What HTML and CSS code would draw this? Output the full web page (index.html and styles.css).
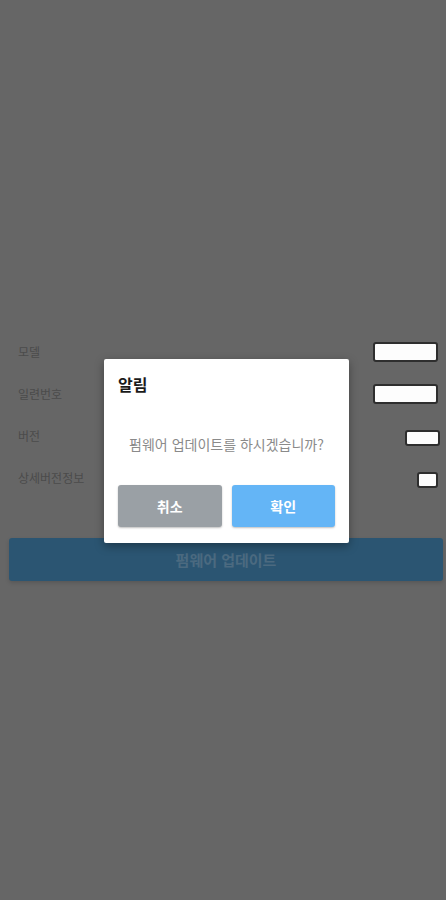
FILE: index.html
```html
<!DOCTYPE html>
<html lang="ko">
<head>
  <meta charset="UTF-8" />
  <meta name="viewport" content="width=device-width, initial-scale=1.0" />
  <title>펌웨어 업데이트</title>
  <link rel="stylesheet" href="styles.css">
</head>
<body>
  <div class="info-list">
    <div class="info-row">
      <span class="info-label">모델</span>
      <span class="info-value value-wide"></span>
    </div>
    <div class="info-row">
      <span class="info-label">일련번호</span>
      <span class="info-value value-wide"></span>
    </div>
    <div class="info-row">
      <span class="info-label">버전</span>
      <span class="info-value value-mid"></span>
    </div>
    <div class="info-row">
      <span class="info-label">상세버전정보</span>
      <span class="info-value value-small"></span>
    </div>
  </div>

  <button class="update-btn">펌웨어 업데이트</button>

  <div class="dialog">
    <div class="dialog-title">알림</div>
    <div class="dialog-message">펌웨어 업데이트를 하시겠습니까?</div>
    <div class="dialog-actions">
      <button class="dialog-btn btn-cancel">취소</button>
      <button class="dialog-btn btn-ok">확인</button>
    </div>
  </div>
</body>
</html>
```

FILE: styles.css
```css
* {
  box-sizing: border-box;
}

body {
  margin: 0;
  min-height: 900px;
  background-color: #666666;
  font-family: 'Noto Sans CJK KR', 'Noto Sans', sans-serif;
  position: relative;
}

.info-list {
  padding: 331px 8px 0 18px;
  display: flex;
  flex-direction: column;
}

.info-row {
  display: flex;
  justify-content: space-between;
  align-items: center;
  height: 43px;
  margin-top: -1px;
}

.info-label {
  font-size: 12px;
  color: #4b4b4b;
  line-height: 22px;
}

.info-value {
  display: block;
  background: #fdfdfd;
  border: 2px solid #2e2e2e;
  border-radius: 3px;
}

.value-wide {
  width: 65px;
  height: 20px;
}

.value-mid {
  width: 35px;
  height: 16px;
  margin: 4px -2px 0 0;
}

.value-small {
  width: 21px;
  height: 16px;
  margin-top: 4px;
}

.update-btn {
  display: block;
  width: 434px;
  height: 43px;
  margin: 39px 0 0 9px;
  border: none;
  border-radius: 3px;
  background-color: #2b5572;
  color: #4b6a80;
  font-family: inherit;
  font-size: 15px;
  font-weight: bold;
  box-shadow: 0 2px 4px rgba(0, 0, 0, 0.15);
}

.dialog {
  position: absolute;
  top: 359px;
  left: 104px;
  width: 245px;
  height: 184px;
  background: #ffffff;
  border-radius: 2px;
  box-shadow: 0 3px 10px rgba(0, 0, 0, 0.35);
  padding: 14px 14px 0 14px;
}

.dialog-title {
  font-size: 16px;
  font-weight: bold;
  color: #1a1a1a;
  line-height: 22px;
}

.dialog-message {
  margin-top: 39px;
  font-size: 14px;
  color: #8a8a8a;
  text-align: center;
  line-height: 20px;
}

.dialog-actions {
  display: flex;
  gap: 10px;
  margin-top: 31px;
}

.dialog-btn {
  flex: 1;
  height: 42px;
  border: none;
  border-radius: 3px;
  color: #ffffff;
  font-family: inherit;
  font-size: 14px;
  font-weight: bold;
  box-shadow: 0 1px 2px rgba(0, 0, 0, 0.25);
}

.btn-cancel {
  background-color: #9aa0a5;
}

.btn-ok {
  background-color: #64b5f6;
}
```
